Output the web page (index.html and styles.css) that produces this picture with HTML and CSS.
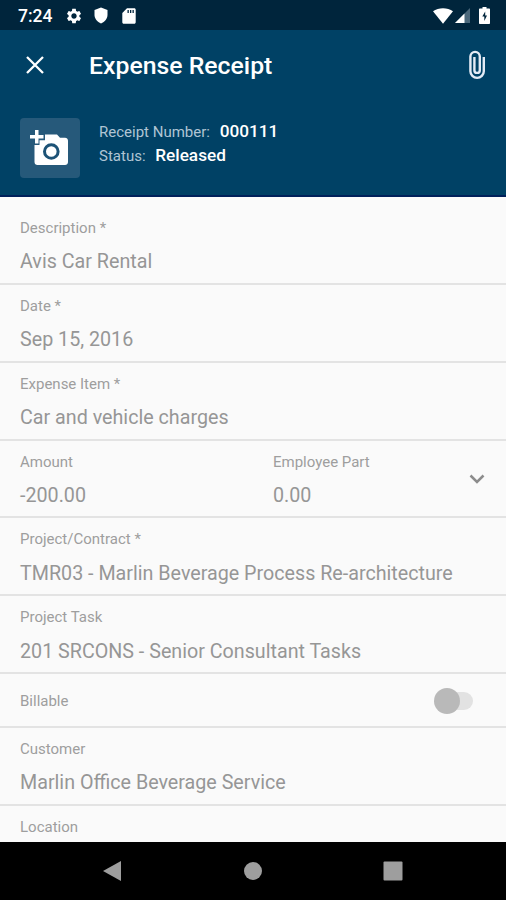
FILE: index.html
```html
<!DOCTYPE html>
<html lang="en">
<head>
  <meta charset="UTF-8">
  <meta name="viewport" content="width=device-width, initial-scale=1.0">
  <title>Expense Receipt</title>
  <link rel="stylesheet" href="styles.css">
</head>
<body>
<div class="screen">

  <div class="status-bar">
    <span class="time">7:24</span>
    <svg class="gear" width="18" height="18" viewBox="0 0 24 24"><path d="M19.14 12.94c.04-.3.06-.61.06-.94 0-.32-.02-.64-.07-.94l2.03-1.58c.18-.14.23-.41.12-.61l-1.92-3.32c-.12-.22-.37-.29-.59-.22l-2.39.96c-.5-.38-1.03-.7-1.62-.94l-.36-2.54c-.04-.24-.24-.41-.48-.41h-3.84c-.24 0-.43.17-.47.41l-.36 2.54c-.59.24-1.13.57-1.62.94l-2.39-.96c-.22-.08-.47 0-.59.22L2.74 8.87c-.12.21-.08.47.12.61l2.03 1.58c-.05.3-.09.63-.09.94s.02.64.07.94l-2.03 1.58c-.18.14-.23.41-.12.61l1.92 3.32c.12.22.37.29.59.22l2.39-.96c.5.38 1.03.7 1.62.94l.36 2.54c.05.24.24.41.48.41h3.84c.24 0 .44-.17.47-.41l.36-2.54c.59-.24 1.13-.56 1.62-.94l2.39.96c.22.08.47 0 .59-.22l1.92-3.32c.12-.22.07-.47-.12-.61l-2.01-1.58zM12 15.6c-1.98 0-3.6-1.62-3.6-3.6s1.62-3.6 3.6-3.6 3.6 1.62 3.6 3.6-1.62 3.6-3.6 3.6z"/></svg>
    <svg class="shield" width="14" height="17" viewBox="0 0 14 17"><path d="M7 .5l6.5 2.6v4.7c0 3.8-2.7 7.2-6.5 8.7C3.2 15 .5 11.6.5 7.8V3.1z"/></svg>
    <svg class="card" width="14" height="16" viewBox="0 0 14 16"><path d="M5 .3h7.2c.9 0 1.5.6 1.5 1.5v12.4c0 .9-.6 1.5-1.5 1.5H1.8c-.9 0-1.5-.6-1.5-1.5V5z"/><path class="slots" d="M5.5 2h1.3v3H5.5zM8 2h1.3v3H8zM10.5 2h1.3v3h-1.3z"/></svg>
    <span class="space"></span>
    <svg class="wifi" width="20" height="16" viewBox="0 0 20 16"><path d="M0 3.2C5.5-.7 14.5-.7 20 3.2L10 15.7z"/></svg>
    <svg class="signal" width="15" height="15" viewBox="0 0 15 15"><path class="faint" d="M15 0v15H0z"/><path d="M9.5 5.5V15H0z"/></svg>
    <svg class="battery" width="11" height="17" viewBox="0 0 11 17"><path d="M3.5 0h4v1.6H10c.6 0 1 .4 1 1V16c0 .6-.4 1-1 1H1c-.6 0-1-.4-1-1V2.6c0-.6.4-1 1-1h2.5z"/><path class="bolt" d="M6.2 4.5L3.3 9.5h2V14L8 8.5H6.2z"/></svg>
  </div>

  <div class="header">
    <div class="toolbar">
      <svg class="close" width="18" height="18" viewBox="0 0 18 18"><path d="M1 1l16 16M17 1L1 17"/></svg>
      <h1>Expense Receipt</h1>
      <svg class="clip" width="16" height="30" viewBox="0 0 16 30"><path d="M14.8 7v14.2a6.7 6.7 0 0 1-13.4 0V6.6a4.7 4.7 0 0 1 9.4 0v13.6a2.7 2.7 0 0 1-5.4 0V7"/></svg>
    </div>
    <div class="summary">
      <div class="photo">
        <svg width="40" height="36" viewBox="0 0 40 36">
          <path d="M15 4.500h12l3 3.300h5c1.700 0 3 1.300 3 3v21.200c0 1.700-1.300 3-3 3H7.500c-1.700 0-3-1.300-3-3V15h5v-4.800H15z"/>
          <circle class="lens" cx="21.3" cy="21.5" r="6.8"/>
          <path d="M5 0h3.5v5h5v3.500h-5v5H5v-5H0V5h5z"/>
        </svg>
      </div>
      <div class="info">
        <p>Receipt Number: <b>000111</b></p>
        <p>Status: <b>Released</b></p>
      </div>
    </div>
  </div>

  <div class="form">
    <div class="field">
      <label>Description *</label>
      <p>Avis Car Rental</p>
    </div>
    <div class="field">
      <label>Date *</label>
      <p>Sep 15, 2016</p>
    </div>
    <div class="field">
      <label>Expense Item *</label>
      <p>Car and vehicle charges</p>
    </div>
    <div class="field split">
      <div class="half">
        <label>Amount</label>
        <p>-200.00</p>
      </div>
      <div class="half">
        <label>Employee Part</label>
        <p>0.00</p>
      </div>
      <svg class="chevron" width="16" height="10" viewBox="0 0 16 10"><path d="M1.5 1.5L8 8l6.5-6.5"/></svg>
    </div>
    <div class="field">
      <label>Project/Contract *</label>
      <p>TMR03 - Marlin Beverage Process Re-architecture</p>
    </div>
    <div class="field">
      <label>Project Task</label>
      <p>201 SRCONS - Senior Consultant Tasks</p>
    </div>
    <div class="field toggle">
      <label>Billable</label>
      <span class="switch"><span class="thumb"></span></span>
    </div>
    <div class="field">
      <label>Customer</label>
      <p>Marlin Office Beverage Service</p>
    </div>
    <div class="field">
      <label>Location</label>
    </div>
  </div>

  <div class="nav-bar">
    <svg width="20" height="22" viewBox="0 0 20 22"><path d="M19 1v20L1 11z"/></svg>
    <svg width="20" height="20" viewBox="0 0 20 20"><circle cx="10" cy="10" r="9"/></svg>
    <svg width="20" height="20" viewBox="0 0 20 20"><rect x=".5" y=".5" width="19" height="19" rx="1"/></svg>
  </div>

</div>
</body>
</html>
```
FILE: styles.css
```css
* {
  margin: 0;
  padding: 0;
  box-sizing: border-box;
}

body {
  font-family: Roboto, "Liberation Sans", sans-serif;
  background: #fafafa;
}

svg {
  display: block;
  flex: none;
  fill: #fff;
}

.screen {
  display: flex;
  flex-direction: column;
  height: 900px;
  overflow: hidden;
}

/* status bar */
.status-bar {
  display: flex;
  flex: none;
  align-items: center;
  height: 30px;
  padding: 1px 16px 0 18px;
  background: #00253c;
  color: #fff;
}

.time {
  width: 47px;
  font-size: 17.5px;
  font-weight: 500;
  line-height: 30px;
}

.shield {
  margin-left: 11px;
}

.card {
  margin-left: 14px;
}

.slots, .bolt {
  fill: #00253c;
}

.space {
  flex: 1;
}

.signal {
  margin-left: 2px;
}

.faint {
  fill: #4b687b;
}

.battery {
  margin-left: 9px;
}

/* header */
.header {
  flex: none;
  height: 167px;
  background: #004165;
  border-bottom: 2px solid #00205a;
}

.toolbar {
  display: flex;
  align-items: center;
  height: 70px;
  padding: 0 21px 0 26px;
}

.close {
  fill: none;
  stroke: #fff;
  stroke-width: 2.3;
}

.toolbar h1 {
  flex: 1;
  margin-left: 45px;
  padding-top: 1px;
  color: #fff;
  font-size: 24.8px;
  font-weight: 500;
}

.clip {
  margin-top: -1px;
  fill: none;
  stroke: #e4ebf5;
  stroke-width: 2.4;
}

.summary {
  display: flex;
  padding: 18px 20px 0;
}

.photo {
  width: 60px;
  height: 60px;
  padding: 12px 0 0 10px;
  border-radius: 4px;
  background: #26597a;
}

.lens {
  fill: none;
  stroke: #1c5276;
  stroke-width: 3;
}

.info {
  margin-left: 19px;
  padding-top: 2px;
}

.info p {
  color: #b0c5d4;
  font-size: 15px;
  line-height: 24px;
  white-space: nowrap;
}

.info b {
  margin-left: 6px;
  color: #fff;
  font-size: 17.2px;
  font-weight: 500;
  line-height: 20px;
}

/* form */
.form {
  flex: 1;
  min-height: 0;
  padding-top: 10px;
  overflow: hidden;
}

.field {
  height: 77.85px;
  padding: 11px 20px 0;
  border-bottom: 2px solid #e3e3e3;
  color: #969696;
}

.field label {
  display: block;
  color: #9e9e9e;
  font-size: 15px;
  line-height: 20px;
}

.field p {
  margin-top: 11.3px;
  font-size: 19.7px;
  line-height: 26px;
  white-space: nowrap;
}

.split {
  display: flex;
}

.half {
  width: 253px;
}

.half + .half {
  width: 196px;
}

.chevron {
  margin-top: 22px;
  fill: none;
  stroke: #8c8c8c;
  stroke-width: 2.5;
}

.toggle {
  display: flex;
  align-items: center;
  justify-content: space-between;
  height: 54px;
  padding: 2px 33px 0 20px;
}

.switch {
  display: flex;
  align-items: center;
  width: 36px;
  height: 18px;
  border-radius: 9px;
  background: #e2e2e2;
}

.thumb {
  flex: none;
  width: 26px;
  height: 26px;
  margin-left: -3px;
  border-radius: 50%;
  background: #b9b9b9;
}

/* bottom navigation */
.nav-bar {
  display: flex;
  flex: none;
  align-items: center;
  justify-content: space-between;
  height: 58px;
  padding: 0 103px 0 102px;
  background: #000;
}

.nav-bar svg {
  fill: #9e9e9e;
}
```
